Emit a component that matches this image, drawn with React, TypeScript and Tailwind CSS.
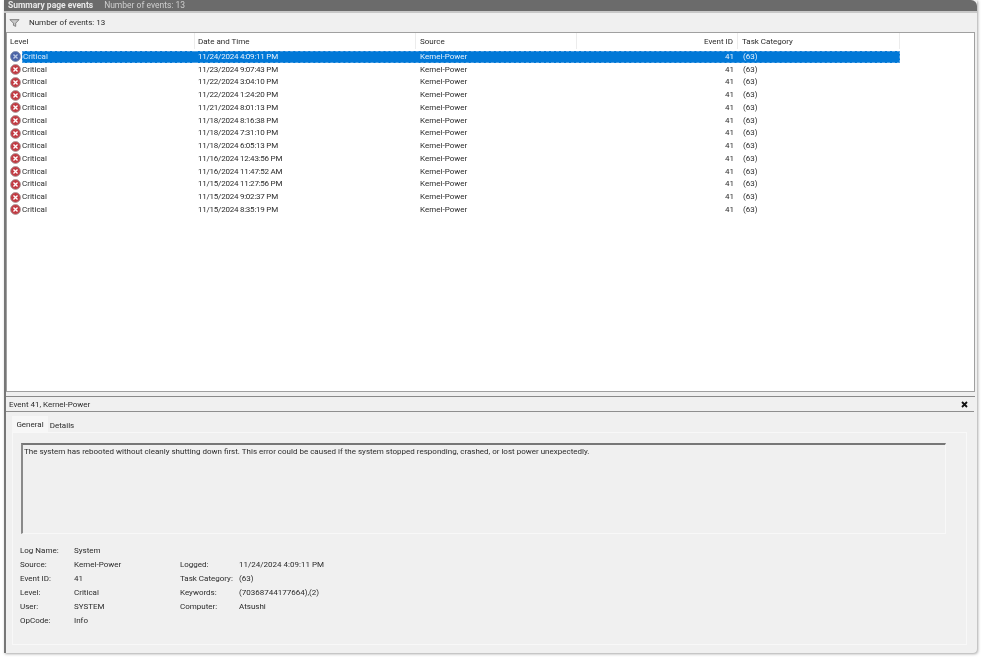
const dates = [
  "11/24/2024 4:09:11 PM",
  "11/23/2024 9:07:43 PM",
  "11/22/2024 3:04:10 PM",
  "11/22/2024 1:24:20 PM",
  "11/21/2024 8:01:13 PM",
  "11/18/2024 8:16:38 PM",
  "11/18/2024 7:31:10 PM",
  "11/18/2024 6:05:13 PM",
  "11/16/2024 12:43:56 PM",
  "11/16/2024 11:47:52 AM",
  "11/15/2024 11:27:56 PM",
  "11/15/2024 9:02:37 PM",
  "11/15/2024 8:35:19 PM",
];

function CriticalIcon({ selected }: { selected: boolean }) {
  return (
    <svg width="11" height="11" viewBox="0 0 12 12" className="shrink-0">
      <circle cx="6" cy="6" r="5.4" fill={selected ? "#4a63a8" : "#c23a42"} stroke={selected ? "#7f8cab" : "#ab9c9c"} strokeWidth="1" />
      <path d="M3.8 3.8 8.2 8.2M8.2 3.8 3.8 8.2" stroke={selected ? "#bccae4" : "#ffffff"} strokeWidth="1.5" />
    </svg>
  );
}

function Row({ date, selected }: { date: string; selected: boolean }) {
  return (
    <div className="flex h-[12.75px] w-[893px] items-center">
      <div className="flex h-full w-[188px] items-center pl-[3px]">
        <CriticalIcon selected={selected} />
        <span className={selected ? "ml-[1px] flex h-full flex-1 items-center border-y border-l border-dashed border-[#4f9fe2] bg-[#0078d7] text-[#d8e8f8]" : "ml-[1px]"}>Critical</span>
      </div>
      <div className={selected ? "flex h-full flex-1 items-center border-y border-r border-dashed border-[#4f9fe2] bg-[#0078d7] text-[#e8f2fb]" : "flex flex-1"}>
        <div className="w-[221px] pl-[3px] tracking-[-0.24px]">{date}</div>
        <div className="w-[161px] pl-[4px]">Kernel-Power</div>
        <div className="w-[161px] pr-[4px] text-right">41</div>
        <div className="flex-1 pl-[5px]">(63)</div>
      </div>
    </div>
  );
}

function Field({ label, value, w }: { label: string; value: string; w: string }) {
  return (
    <div className="flex h-[14px] items-center whitespace-nowrap">
      <div className={w}>{label}</div>
      <div>{value}</div>
    </div>
  );
}

export default function App() {
  return (
    <div className="h-[662px] w-[986px] overflow-hidden bg-white pl-[4px] text-[8px] leading-none text-[#2b2b2b] blur-[0.3px]" style={{ fontFamily: 'Roboto, "Noto Sans", sans-serif' }}>
      <div className="flex h-[653px] w-[973px] flex-col rounded-br-[4px] bg-[#f0f0f0] shadow-[1px_1px_3px_rgba(0,0,0,0.35)]">
        <div className="flex h-[11px] items-end gap-[11px] rounded-tr-[6px] bg-[#6b6b6b] pb-[2px] pl-[4px] text-[8.5px] text-[#e8e8e8]">
          <span className="font-bold">Summary page events</span>
          <span className="text-[#cfcfcf]">Number of events: 13</span>
        </div>
        <div className="h-[2px] bg-[#c8c8c8]" />
        <div className="flex flex-1 flex-col border-l-2 border-[#777] pr-[2px]">
          <div className="flex h-[19px] items-center gap-[9px] pl-[3px] pt-[1px]">
            <svg width="11" height="8" viewBox="0 0 13 10">
              <path d="M0.8 0.8h11.4L8 5.2V9.2L5.2 8V5.2z" fill="#c9c9c9" stroke="#6a6a6a" strokeWidth="1" />
            </svg>
            <span>Number of events: 13</span>
          </div>
          <div className="h-[360px] border border-[#a0a0a0] bg-white">
            <div className="flex h-[16px] w-[893px] items-center">
              <div className="h-full w-[188px] border-r border-[#ececec] pl-[3px] pt-[5px]">Level</div>
              <div className="h-full w-[221px] border-r border-[#ececec] pl-[3px] pt-[5px]">Date and Time</div>
              <div className="h-full w-[161px] border-r border-[#ececec] pl-[4px] pt-[5px]">Source</div>
              <div className="h-full w-[161px] border-r border-[#ececec] pr-[4px] pt-[5px] text-right">Event ID</div>
              <div className="h-full flex-1 border-r border-[#ececec] pl-[4px] pt-[5px]">Task Category</div>
            </div>
            <div className="pt-[1.5px]">
              {dates.map((d, i) => (
                <Row key={d} date={d} selected={i === 0} />
              ))}
            </div>
          </div>
          <div className="h-[4px]" />
          <div className="h-[1px] bg-[#8a8a8a]" />
          <div className="mr-[1px] flex h-[15px] items-center justify-between border-b border-[#8f8f8f] pl-[3px] pr-[6px] pt-[1px]">
            <span>Event 41, Kernel-Power</span>
            <svg width="7" height="7" viewBox="0 0 7 7">
              <path d="M1 1 6 6M6 1 1 6" stroke="#111" strokeWidth="1.8" />
            </svg>
          </div>
          <div className="flex flex-1 flex-col pl-[6px] pr-[8px] pt-[4px]">
            <div className="flex h-[16px]">
              <div className="flex h-full w-[36px] items-center justify-center bg-[#f7f7f7] pt-[1px]">General</div>
              <div className="flex h-full w-[28px] items-center justify-center pt-[3px]">Details</div>
            </div>
            <div className="mb-[8px] flex flex-1 flex-col border border-[#f8f8f8] pl-[8px] pr-[20px] pt-[10px]">
              <div className="h-[91px] border-b border-l-2 border-r border-t-2 border-b-[#f8f8f8] border-l-[#8a8a8a] border-r-[#f8f8f8] border-t-[#777] pl-[1px] pt-[3px]">
                The system has rebooted without cleanly shutting down first. This error could be caused if the system stopped responding, crashed, or lost power unexpectedly.
              </div>
              <div className="-ml-[1px] mt-[10px] flex">
                <div className="w-[160px]">
                  <Field label="Log Name:" value="System" w="w-[54px]" />
                  <Field label="Source:" value="Kernel-Power" w="w-[54px]" />
                  <Field label="Event ID:" value="41" w="w-[54px]" />
                  <Field label="Level:" value="Critical" w="w-[54px]" />
                  <Field label="User:" value="SYSTEM" w="w-[54px]" />
                  <Field label="OpCode:" value="Info" w="w-[54px]" />
                </div>
                <div className="pt-[14px]">
                  <Field label="Logged:" value="11/24/2024 4:09:11 PM" w="w-[59px]" />
                  <Field label="Task Category:" value="(63)" w="w-[59px]" />
                  <Field label="Keywords:" value="(70368744177664),(2)" w="w-[59px]" />
                  <Field label="Computer:" value="Atsushi" w="w-[59px]" />
                </div>
              </div>
            </div>
          </div>
        </div>
      </div>
    </div>
  );
}
